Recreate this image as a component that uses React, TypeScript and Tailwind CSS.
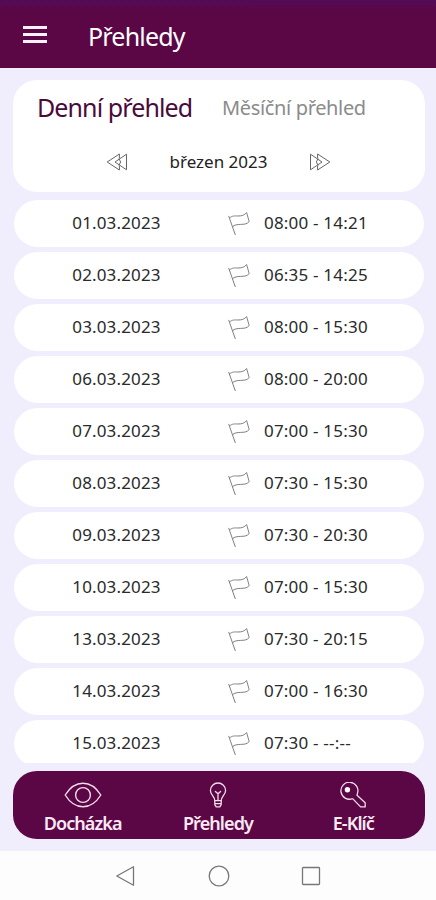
import React from "react";

interface DayEntry {
  date: string;
  time: string;
}

const days: DayEntry[] = [
  { date: "01.03.2023", time: "08:00 - 14:21" },
  { date: "02.03.2023", time: "06:35 - 14:25" },
  { date: "03.03.2023", time: "08:00 - 15:30" },
  { date: "06.03.2023", time: "08:00 - 20:00" },
  { date: "07.03.2023", time: "07:00 - 15:30" },
  { date: "08.03.2023", time: "07:30 - 15:30" },
  { date: "09.03.2023", time: "07:30 - 20:30" },
  { date: "10.03.2023", time: "07:00 - 15:30" },
  { date: "13.03.2023", time: "07:30 - 20:15" },
  { date: "14.03.2023", time: "07:00 - 16:30" },
  { date: "15.03.2023", time: "07:30 - --:--" },
];

const DoubleArrow: React.FC<{ className?: string }> = ({ className }) => (
  <svg
    viewBox="0 0 22 18"
    className={`h-[18px] w-[22px] shrink-0 ${className ?? ""}`}
    fill="none"
    stroke="#666"
    strokeWidth="1"
    strokeLinejoin="round"
  >
    <path d="M13.4 5V1L1.2 9l12.2 8v-4" />
    <path d="M20.5 1.2v15.6L9 9z" />
    <path d="M12.9 5.4 14.6 9l-1.7 3.6" />
  </svg>
);

const Flag = () => (
  <svg
    viewBox="0 0 22 25"
    className="h-[25px] w-[22px] shrink-0"
    fill="none"
    stroke="#808080"
    strokeWidth="1"
    strokeLinecap="round"
    strokeLinejoin="round"
  >
    <path d="M0.8 5.3 7.2 23.6" />
    <path d="M1.5 7C4.4 4.4 6.6 5 9.8 5 13.4 5 16.6 4.4 18.6 1.5L21.2 10.6C18.8 13.4 16 13.2 12.7 13.4 9.3 13.5 6.6 13.6 4.5 15.8" />
  </svg>
);

const EyeIcon = () => (
  <svg viewBox="0 0 38 26" className="h-[26px] w-[38px]" fill="none" stroke="#f3dcea" strokeWidth="1.4">
    <path d="M1.2 13C6 5.2 12 1.2 19 1.2S32 5.2 36.8 13C32 20.8 26 24.8 19 24.8S6 20.8 1.2 13z" />
    <circle cx="19" cy="13" r="7.4" />
  </svg>
);

const BulbIcon = () => (
  <svg
    viewBox="0 0 18 26"
    className="h-[26px] w-[18px]"
    fill="none"
    stroke="#f3dcea"
    strokeWidth="1.3"
    strokeLinejoin="round"
    strokeLinecap="round"
  >
    <path d="M5.8 18.6C5.6 14.6 1.4 12.6 1.4 8.4a7.6 7.4 0 0 1 15.2 0c0 4.2-4.2 6.2-4.4 10.2z" />
    <path d="M5.8 18.6v4l1.4 2.2h3.6l1.4-2.2v-4M5.8 21.6h6.4" />
    <path d="M9 18.2v-6.4M6.4 9.4 9 11.8l2.6-2.4" />
  </svg>
);

const KeyIcon = () => (
  <svg viewBox="0 0 26 26" className="h-[26px] w-[26px]" fill="none" stroke="#f3dcea" strokeWidth="1.3" strokeLinejoin="round">
    <path d="M12.6 16.6A8.5 8.5 0 1 1 17.4 11.6L17 13.2 25.2 20.8v4.1h-4.6L12.6 16.6" />
    <circle cx="7.4" cy="7.8" r="2.7" fill="#fff" stroke="none" />
  </svg>
);

const TopBar = () => (
  <header className="flex h-[68px] shrink-0 items-center bg-linear-to-b from-[#520a58] to-[#5b0645] to-15% pl-[23px] text-white">
    <div className="mt-px flex w-6 flex-col gap-[4.5px]">
      <span className="h-[2.5px] bg-[#fdf0f6]" />
      <span className="h-[2.5px] bg-[#fdf0f6]" />
      <span className="h-[2.5px] bg-[#fdf0f6]" />
    </div>
    <h1 className="ml-[41px] mt-[3px] text-[25px] leading-8 tracking-[-0.8px]">Přehledy</h1>
  </header>
);

const PeriodCard = () => (
  <section className="h-28 shrink-0 rounded-[24px] bg-white">
    <div className="flex h-[56px] items-center whitespace-nowrap pl-6">
      <button className="w-[185px] text-left text-[25px] tracking-[-0.9px] text-[#4a0a3c]">Denní přehled</button>
      <button className="text-[20px] tracking-[-0.35px] text-[#8b8b8b]">Měsíční přehled</button>
    </div>
    <div className="flex h-[51px] items-center pl-[93px]">
      <DoubleArrow />
      <p className="w-[181px] text-center text-[17px] text-[#222]">březen 2023</p>
      <DoubleArrow className="-scale-x-100" />
    </div>
  </section>
);

const DayRow: React.FC<DayEntry> = ({ date, time }) => (
  <li className="mx-px flex h-[47px] shrink-0 items-center rounded-full bg-white pb-px text-[17px] text-[#2a2a2a]">
    <span className="w-[205px] text-center tracking-[0.15px]">{date}</span>
    <span className="ml-[9px]">
      <Flag />
    </span>
    <span className="ml-[14px] whitespace-nowrap tracking-[0.2px]">{time}</span>
  </li>
);

const tabs = [
  { label: "Docházka", icon: <EyeIcon /> },
  { label: "Přehledy", icon: <BulbIcon /> },
  { label: "E-Klíč", icon: <KeyIcon /> },
];

const BottomNav = () => (
  <nav className="mt-2 grid h-[68px] shrink-0 grid-cols-3 rounded-[24px] bg-[#5b0645] pl-[2px] pr-1 text-[#fbeaf4]">
    {tabs.map((tab) => (
      <button key={tab.label} className="flex flex-col items-center pt-[11px]">
        {tab.icon}
        <span className="mt-[3px] text-[18px] font-semibold leading-6 tracking-[-0.9px]">{tab.label}</span>
      </button>
    ))}
  </nav>
);

const SystemBar = () => (
  <footer className="flex h-[49px] shrink-0 items-center bg-[#fdfdfd] pl-[115px]">
    <svg viewBox="0 0 20 22" className="h-[22px] w-5" fill="none" stroke="#777" strokeWidth="1.3" strokeLinejoin="round">
      <path d="M18.5 1.8v18.4L1.8 11z" />
    </svg>
    <svg viewBox="0 0 22 22" className="ml-[73px] size-[22px]" fill="none" stroke="#777" strokeWidth="1.3">
      <circle cx="11" cy="11" r="9.8" />
    </svg>
    <svg viewBox="0 0 20 20" className="ml-[71px] size-5" fill="none" stroke="#777" strokeWidth="1.3">
      <rect x="1.5" y="1.5" width="17" height="17" rx="0.8" />
    </svg>
  </footer>
);

export default function App() {
  return (
    <div className="flex h-[900px] w-[436px] flex-col overflow-hidden bg-[#f0edfd] font-['Noto_Sans',sans-serif]">
      <TopBar />
      <main className="flex min-h-0 flex-1 flex-col pl-[13px] pr-[11px] pt-3">
        <PeriodCard />
        <ul className="mt-2 flex h-[563px] shrink-0 flex-col gap-[5px] overflow-hidden">
          {days.map((day) => (
            <DayRow key={day.date} {...day} />
          ))}
        </ul>
        <BottomNav />
      </main>
      <SystemBar />
    </div>
  );
}
